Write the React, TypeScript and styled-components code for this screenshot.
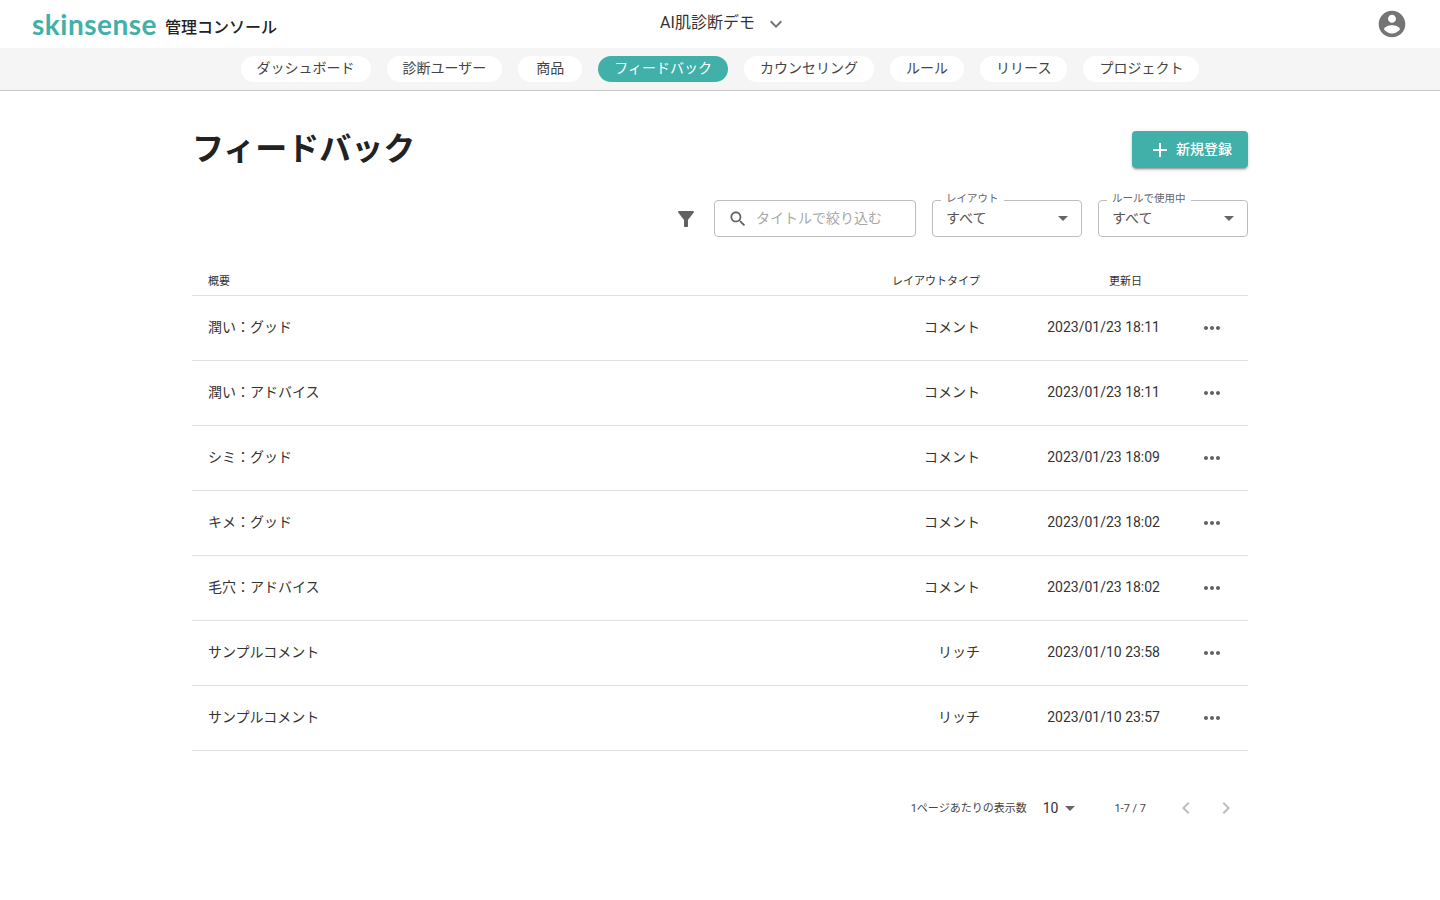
import React from 'react'
import styled, { createGlobalStyle } from 'styled-components'

const TEAL = '#40b0a9'

const ICONS = {
  account: 'M12 2C6.48 2 2 6.48 2 12s4.48 10 10 10 10-4.48 10-10S17.52 2 12 2zm0 3c1.66 0 3 1.34 3 3s-1.34 3-3 3-3-1.34-3-3 1.34-3 3-3zm0 14.2c-2.5 0-4.71-1.28-6-3.22.03-1.99 4-3.08 6-3.08 1.99 0 5.97 1.09 6 3.08-1.29 1.94-3.5 3.22-6 3.22z',
  expand: 'M16.59 8.59L12 13.17 7.41 8.59 6 10l6 6 6-6z',
  add: 'M19 13h-6v6h-2v-6H5v-2h6V5h2v6h6v2z',
  filter: 'M4.25 5.61C6.27 8.2 10 13 10 13v6c0 .55.45 1 1 1h2c.55 0 1-.45 1-1v-6s3.72-4.8 5.74-7.39c.51-.66.04-1.61-.79-1.61H5.04c-.83 0-1.3.95-.79 1.61z',
  search: 'M15.5 14h-.79l-.28-.27C15.41 12.59 16 11.11 16 9.5 16 5.91 13.09 3 9.5 3S3 5.91 3 9.5 5.91 16 9.5 16c1.61 0 3.09-.59 4.23-1.57l.27.28v.79l5 4.99L20.49 19l-4.99-5zm-6 0C7.01 14 5 11.99 5 9.5S7.01 5 9.5 5 14 7.01 14 9.5 11.99 14 9.5 14z',
  more: 'M6 10c-1.1 0-2 .9-2 2s.9 2 2 2 2-.9 2-2-.9-2-2-2zm12 0c-1.1 0-2 .9-2 2s.9 2 2 2 2-.9 2-2-.9-2-2-2zm-6 0c-1.1 0-2 .9-2 2s.9 2 2 2 2-.9 2-2-.9-2-2-2z',
  caret: 'M7 10l5 5 5-5z',
  left: 'M15.41 7.41L14 6l-6 6 6 6 1.41-1.41L10.83 12z',
  right: 'M10 6L8.59 7.41 13.17 12l-4.58 4.59L10 18l6-6z',
}

type IconProps = { name: keyof typeof ICONS; size?: number; color?: string }

const Icon = ({ name, size = 24, color = '#757575' }: IconProps) => (
  <svg width={size} height={size} viewBox="0 0 24 24" fill={color} style={{ flexShrink: 0, display: 'block' }}>
    <path d={ICONS[name]} />
  </svg>
)

const GlobalStyle = createGlobalStyle`
  html, body {
    margin: 0;
    padding: 0;
    background: #fff;
    font-family: Roboto, "Noto Sans CJK JP", sans-serif;
    color: rgba(0, 0, 0, 0.87);
  }
  * { box-sizing: border-box; }
`

const Header = styled.header`
  height: 48px;
  display: grid;
  grid-template-columns: 1fr auto 1fr;
  align-items: center;
  padding: 0 32px;
`

const Brand = styled.div`
  display: flex;
  align-items: baseline;
  gap: 8px;
`

const Logo = styled.span`
  font-family: Lato, sans-serif;
  font-size: 28px;
  font-weight: 700;
  line-height: 48px;
  letter-spacing: 0.5px;
  color: ${TEAL};
`

const BrandSub = styled.span`
  font-size: 16px;
  font-weight: 500;
  color: #222;
  position: relative;
  top: -2px;
`

const Project = styled.div`
  display: flex;
  align-items: center;
  gap: 9px;
  padding-left: 8px;
  font-size: 16px;
  font-weight: 400;
  line-height: 20px;
  color: #333;
`

const ProjectName = styled.span`
  position: relative;
  top: -1px;
`

const Account = styled.div`
  justify-self: end;
`

const Nav = styled.nav`
  height: 43px;
  display: flex;
  justify-content: center;
  align-items: flex-start;
  gap: 16px;
  padding-top: 8px;
  background: #f5f5f5;
  border-bottom: 1px solid #c8c8c8;
`

const Pill = styled.a<{ $active?: boolean }>`
  height: 26px;
  min-width: 64px;
  padding: 0 16px 4px;
  border-radius: 13px;
  display: flex;
  align-items: center;
  justify-content: center;
  font-size: 14px;
  background: ${(p) => (p.$active ? TEAL : '#fff')};
  color: ${(p) => (p.$active ? '#fff' : '#444')};
`

const Main = styled.main`
  width: 1056px;
  margin: 0 auto;
  padding-top: 40px;
`

const TitleRow = styled.div`
  display: flex;
  justify-content: space-between;
  align-items: flex-start;
`

const Title = styled.h1`
  margin: 1px 0 0;
  font-size: 32px;
  line-height: 34px;
  font-weight: 700;
  color: #222;
`

const AddButton = styled.button`
  width: 116px;
  height: 37px;
  border: 0;
  border-radius: 4px;
  background: ${TEAL};
  color: #fff;
  font: inherit;
  font-size: 14px;
  font-weight: 500;
  display: flex;
  align-items: center;
  justify-content: center;
  gap: 4px;
  padding: 0;
  box-shadow: 0 3px 1px -2px rgba(0, 0, 0, 0.2), 0 2px 2px 0 rgba(0, 0, 0, 0.14), 0 1px 5px 0 rgba(0, 0, 0, 0.12);
`

const AddLabel = styled.span`
  position: relative;
  top: -2px;
`

const FilterRow = styled.div`
  margin-top: 32px;
  display: flex;
  justify-content: flex-end;
  align-items: center;
  gap: 16px;
`

const SearchBox = styled.div`
  width: 202px;
  height: 37px;
  border: 1px solid #bdbdbd;
  border-radius: 4px;
  display: flex;
  align-items: center;
  gap: 8px;
  padding-left: 13px;
  font-size: 14px;
  color: #a8a8a8;
`

const FieldText = styled.span`
  position: relative;
  top: -2px;
`

const Select = styled.div`
  position: relative;
  width: 150px;
  height: 37px;
  border: 1px solid #bdbdbd;
  border-radius: 4px;
  display: flex;
  align-items: center;
  justify-content: space-between;
  padding: 0 6px 0 13px;
  font-size: 14px;
  color: #555;
`

const Caret = styled.span`
  position: relative;
  top: -1px;
`

const Legend = styled.span`
  position: absolute;
  top: -9px;
  left: 8px;
  padding: 0 5px;
  background: #fff;
  font-size: 10.5px;
  line-height: 14px;
  color: #666;
`

const TableHead = styled.div`
  margin-top: 24px;
  height: 35px;
  display: grid;
  grid-template-columns: 1fr 160px 196px 72px;
  align-items: center;
  padding-top: 5px;
  border-bottom: 1px solid #e0e0e0;
  font-size: 11px;
  color: #333;
`

const Row = styled.div`
  height: 65px;
  display: grid;
  grid-template-columns: 1fr 160px 196px 72px;
  align-items: center;
  border-bottom: 1px solid #e0e0e0;
  font-size: 14px;
  color: #333;
`

const CellTitle = styled.div<{ $head?: boolean }>`
  padding-left: 16px;
  position: relative;
  top: ${(p) => (p.$head ? '-1px' : '-2px')};
`

const CellType = styled.div<{ $head?: boolean }>`
  text-align: right;
  position: relative;
  top: ${(p) => (p.$head ? '-1px' : '-2px')};
`

const CellDate = styled.div<{ $head?: boolean }>`
  text-align: right;
  position: relative;
  top: -1px;
  padding-right: ${(p) => (p.$head ? '34px' : '16px')};
`

const CellAction = styled.div`
  display: flex;
  justify-content: center;
`

const Pager = styled.div`
  margin-top: 40px;
  height: 34px;
  display: flex;
  justify-content: flex-end;
  align-items: center;
  padding-right: 10px;
  font-size: 11px;
  color: #444;
`

const PagerLabel = styled.span`
  position: relative;
  top: -1px;
`

const PerPage = styled.div`
  margin-left: 16px;
  display: flex;
  align-items: center;
  font-size: 14px;
  color: #333;
`

const PageInfo = styled.span`
  margin-left: 32px;
  margin-right: 28px;
`

const PageArrows = styled.div`
  display: flex;
  gap: 16px;
`

const TABS = ['ダッシュボード', '診断ユーザー', '商品', 'フィードバック', 'カウンセリング', 'ルール', 'リリース', 'プロジェクト']

const ROWS = [
  ['潤い：グッド', 'コメント', '2023/01/23 18:11'],
  ['潤い：アドバイス', 'コメント', '2023/01/23 18:11'],
  ['シミ：グッド', 'コメント', '2023/01/23 18:09'],
  ['キメ：グッド', 'コメント', '2023/01/23 18:02'],
  ['毛穴：アドバイス', 'コメント', '2023/01/23 18:02'],
  ['サンプルコメント', 'リッチ', '2023/01/10 23:58'],
  ['サンプルコメント', 'リッチ', '2023/01/10 23:57'],
]

const App = () => (
  <>
    <GlobalStyle />
    <Header>
      <Brand>
        <Logo>skinsense</Logo>
        <BrandSub>管理コンソール</BrandSub>
      </Brand>
      <Project>
        <ProjectName>AI肌診断デモ</ProjectName>
        <Icon name="expand" />
      </Project>
      <Account>
        <Icon name="account" size={32} />
      </Account>
    </Header>
    <Nav>
      {TABS.map((tab) => (
        <Pill key={tab} $active={tab === 'フィードバック'}>
          {tab}
        </Pill>
      ))}
    </Nav>
    <Main>
      <TitleRow>
        <Title>フィードバック</Title>
        <AddButton>
          <Icon name="add" color="#fff" />
          <AddLabel>新規登録</AddLabel>
        </AddButton>
      </TitleRow>
      <FilterRow>
        <Icon name="filter" color="#616161" />
        <SearchBox>
          <Icon name="search" size={20} color="#616161" />
          <FieldText>タイトルで絞り込む</FieldText>
        </SearchBox>
        <Select>
          <Legend>レイアウト</Legend>
          <FieldText>すべて</FieldText>
          <Caret>
            <Icon name="caret" color="#666" />
          </Caret>
        </Select>
        <Select>
          <Legend>ルールで使用中</Legend>
          <FieldText>すべて</FieldText>
          <Caret>
            <Icon name="caret" color="#666" />
          </Caret>
        </Select>
      </FilterRow>
      <TableHead>
        <CellTitle $head>概要</CellTitle>
        <CellType $head>レイアウトタイプ</CellType>
        <CellDate $head>更新日</CellDate>
        <div />
      </TableHead>
      {ROWS.map((row, index) => (
        <Row key={index}>
          <CellTitle>{row[0]}</CellTitle>
          <CellType>{row[1]}</CellType>
          <CellDate>{row[2]}</CellDate>
          <CellAction>
            <Icon name="more" color="#616161" />
          </CellAction>
        </Row>
      ))}
      <Pager>
        <PagerLabel>1ページあたりの表示数</PagerLabel>
        <PerPage>
          10
          <Icon name="caret" color="#666" />
        </PerPage>
        <PageInfo>1-7 / 7</PageInfo>
        <PageArrows>
          <Icon name="left" color="#bdbdbd" />
          <Icon name="right" color="#bdbdbd" />
        </PageArrows>
      </Pager>
    </Main>
  </>
)

export default App
